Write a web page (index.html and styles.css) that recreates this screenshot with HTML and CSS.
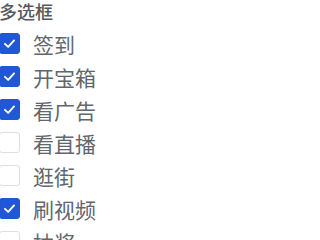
FILE: index.html
```html
<!DOCTYPE html>
<html lang="zh">
<head>
<meta charset="utf-8">
<link rel="stylesheet" href="styles.css">
</head>
<body>
<div class="page">
  <div class="title">多选框</div>
  <div class="list">
    <label class="item checked"><span class="box"><svg viewBox="0 0 20 20" class="tick"><path d="M5.2 10.4 L8.6 13.6 L14.8 6.8" /></svg></span><span class="text">签到</span></label>
    <label class="item checked"><span class="box"><svg viewBox="0 0 20 20" class="tick"><path d="M5.2 10.4 L8.6 13.6 L14.8 6.8" /></svg></span><span class="text">开宝箱</span></label>
    <label class="item checked"><span class="box"><svg viewBox="0 0 20 20" class="tick"><path d="M5.2 10.4 L8.6 13.6 L14.8 6.8" /></svg></span><span class="text">看广告</span></label>
    <label class="item"><span class="box"></span><span class="text">看直播</span></label>
    <label class="item"><span class="box"></span><span class="text">逛街</span></label>
    <label class="item checked"><span class="box"><svg viewBox="0 0 20 20" class="tick"><path d="M5.2 10.4 L8.6 13.6 L14.8 6.8" /></svg></span><span class="text">刷视频</span></label>
    <label class="item"><span class="box"></span><span class="text">抽奖</span></label>
  </div>
</div>
</body>
</html>
```
FILE: styles.css
```css
html, body {
  margin: 0;
  padding: 0;
  background: #ffffff;
  overflow: hidden;
}
.page {
  width: 320px;
  height: 240px;
  overflow: hidden;
  margin-left: -1px;
  font-family: "Noto Sans CJK SC", "Noto Sans", sans-serif;
}
.title {
  font-size: 18px;
  line-height: 20px;
  padding-top: 1px;
  color: #55585e;
  font-weight: 500;
}
.list {
  display: flex;
  flex-direction: column;
  padding-top: 6px;
}
.item {
  display: flex;
  align-items: center;
  height: 33px;
  gap: 13px;
}
.box {
  width: 19px;
  height: 19px;
  border: 1px solid #dcdfe6;
  border-radius: 3px;
  background: #ffffff;
  display: flex;
  align-items: center;
  justify-content: center;
  flex: none;
}
.item.checked .box {
  background: #1f57d6;
  border-color: #1f57d6;
}
.tick {
  width: 21px;
  height: 21px;
  fill: none;
  stroke: #ffffff;
  stroke-width: 2;
  stroke-linecap: round;
  stroke-linejoin: round;
}
.text {
  font-size: 21px;
  line-height: 24px;
  color: #62666c;
}
```
